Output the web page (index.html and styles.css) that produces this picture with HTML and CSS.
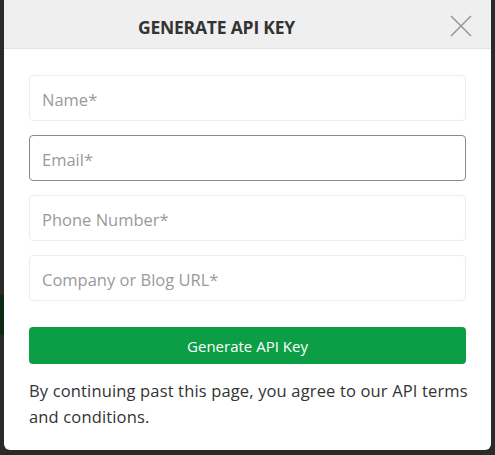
FILE: index.html
```html
<!DOCTYPE html>
<html>
<head>
<meta charset="utf-8">
<link rel="stylesheet" href="styles.css">
</head>
<body>
<div class="backdrop">
  <div class="side side-left"></div>
  <div class="modal">
    <div class="modal-header">
      <h2 class="modal-title">GENERATE API KEY</h2>
      <button class="close" aria-label="Close">
        <svg width="22" height="22" viewBox="0 0 22 22"><path d="M1 1L21 21M21 1L1 21" stroke="#999" stroke-width="1.6" fill="none"/></svg>
      </button>
    </div>
    <form class="modal-body">
      <input class="field" type="text" placeholder="Name*">
      <input class="field focused" type="email" placeholder="Email*">
      <input class="field" type="text" placeholder="Phone Number*">
      <input class="field" type="text" placeholder="Company or Blog URL*">
      <button type="button" class="submit">Generate API Key</button>
      <p class="terms">By continuing past this page, you agree to our API terms and conditions.</p>
    </form>
  </div>
</div>
</body>
</html>
```
FILE: styles.css
```css
* { box-sizing: border-box; }
html, body { margin: 0; padding: 0; }
body {
  background: #2a2a2a;
  font-family: "Open Sans", "Noto Sans", sans-serif;
  width: 495px;
  height: 455px;
  overflow: hidden;
}
.backdrop {
  display: flex;
  padding: 0 4px 0 4px;
  height: 455px;
  position: relative;
}
.side-left {
  position: absolute;
  left: 0; top: 295px;
  width: 4px; height: 40px;
  background: #0d2a15;
}
.modal {
  width: 487px;
  height: 450px;
  background: #fff;
  border-radius: 0 0 6px 6px;
  display: flex;
  flex-direction: column;
  overflow: hidden;
}
.modal-header {
  height: 49px;
  background: #efefef;
  border-bottom: 1px solid #e3e3e3;
  display: flex;
  align-items: center;
  justify-content: center;
  padding: 5px 62px 0 0;
  position: relative;
}
.modal-title {
  margin: 0;
  font-size: 17.5px;
  font-weight: 700;
  color: #333;
  letter-spacing: -0.2px;
}
.close {
  position: absolute;
  right: 19px;
  top: 15px;
  width: 22px;
  height: 22px;
  padding: 0;
  border: 0;
  background: none;
  display: flex;
}
.modal-body {
  padding: 26px 25px 0 25px;
  display: flex;
  flex-direction: column;
  gap: 14px;
  margin: 0;
}
.field {
  height: 46px;
  width: 100%;
  border: 1px solid #ececec;
  border-radius: 4px;
  padding: 2px 12px 0 12px;
  font-family: inherit;
  font-size: 16.5px;
  color: #333;
  outline: none;
}
.field::placeholder { color: #9a9a9a; }
.field.focused { border-color: #8a8a8a; }
.submit {
  margin-top: 12px;
  height: 37px;
  background: #0c9e45;
  color: #fff;
  border: 0;
  border-radius: 4px;
  font-family: inherit;
  font-size: 15px;
  padding-top: 2px;
}
.terms {
  margin: 0 -12px 0 0;
  font-size: 16.5px;
  letter-spacing: 0.15px;
  line-height: 26px;
  color: #333;
}
```
